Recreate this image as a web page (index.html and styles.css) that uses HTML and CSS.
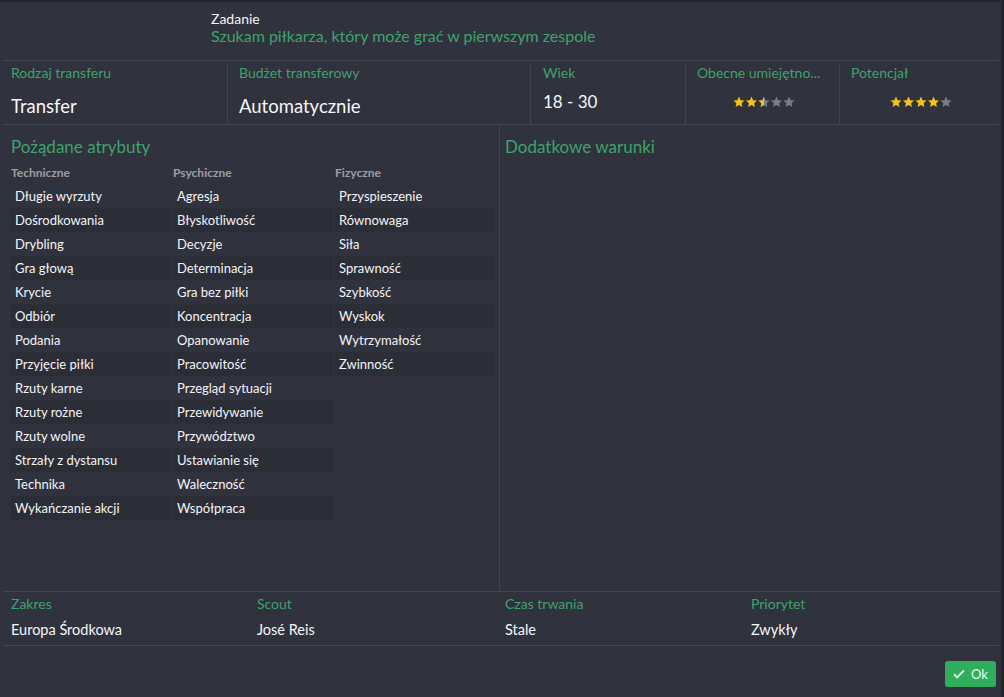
FILE: index.html
```html
<!DOCTYPE html>
<html lang="pl">
<head>
<meta charset="utf-8">
<link rel="stylesheet" href="styles.css">
</head>
<body>
<div class="window">
  <div class="header">
    <div class="task-label">Zadanie</div>
    <div class="task-text">Szukam piłkarza, który może grać w pierwszym zespole</div>
  </div>
  <div class="info">
    <div class="cell c1"><div class="lbl">Rodzaj transferu</div><div class="val">Transfer</div></div>
    <div class="cell c2"><div class="lbl">Budżet transferowy</div><div class="val">Automatycznie</div></div>
    <div class="cell c3"><div class="lbl">Wiek</div><div class="val val-up">18 - 30</div></div>
    <div class="cell c4"><div class="lbl" title="Obecne umiejętności">Obecne umiejętno...</div>
      <div class="stars">
        <svg width="62" height="12" viewBox="0 0 62 12">
          <defs>
            <path id="st" d="M6 0.6l1.6 3.6 3.9 0.4-2.9 2.6 0.8 3.9L6 9.1 2.6 11.1l0.8-3.9L0.5 4.6l3.9-0.4z"/>
            <clipPath id="half"><rect x="0" y="0" width="6" height="12"/></clipPath>
          </defs>
          <use href="#st" x="0" fill="#f5c31a"/>
          <use href="#st" x="12.5" fill="#f5c31a"/>
          <use href="#st" x="25" fill="#7b7c84"/>
          <g transform="translate(25 0)"><use href="#st" fill="#f5c31a" clip-path="url(#half)"/></g>
          <use href="#st" x="37.5" fill="#7b7c84"/>
          <use href="#st" x="50" fill="#7b7c84"/>
        </svg>
      </div>
    </div>
    <div class="cell c5"><div class="lbl">Potencjał</div>
      <div class="stars">
        <svg width="62" height="12" viewBox="0 0 62 12">
          <use href="#st" x="0" fill="#f5c31a"/>
          <use href="#st" x="12.5" fill="#f5c31a"/>
          <use href="#st" x="25" fill="#f5c31a"/>
          <use href="#st" x="37.5" fill="#f5c31a"/>
          <use href="#st" x="50" fill="#7b7c84"/>
        </svg>
      </div>
    </div>
  </div>
  <div class="middle">
    <div class="attrs">
      <div class="section-title">Pożądane atrybuty</div>
      <div class="cols">
        <div class="col">
          <div class="col-head">Techniczne</div>
          <div class="row">Długie wyrzuty</div>
          <div class="row">Dośrodkowania</div>
          <div class="row">Drybling</div>
          <div class="row">Gra głową</div>
          <div class="row">Krycie</div>
          <div class="row">Odbiór</div>
          <div class="row">Podania</div>
          <div class="row">Przyjęcie piłki</div>
          <div class="row">Rzuty karne</div>
          <div class="row">Rzuty rożne</div>
          <div class="row">Rzuty wolne</div>
          <div class="row">Strzały z dystansu</div>
          <div class="row">Technika</div>
          <div class="row">Wykańczanie akcji</div>
        </div>
        <div class="col">
          <div class="col-head">Psychiczne</div>
          <div class="row">Agresja</div>
          <div class="row">Błyskotliwość</div>
          <div class="row">Decyzje</div>
          <div class="row">Determinacja</div>
          <div class="row">Gra bez piłki</div>
          <div class="row">Koncentracja</div>
          <div class="row">Opanowanie</div>
          <div class="row">Pracowitość</div>
          <div class="row">Przegląd sytuacji</div>
          <div class="row">Przewidywanie</div>
          <div class="row">Przywództwo</div>
          <div class="row">Ustawianie się</div>
          <div class="row">Waleczność</div>
          <div class="row">Współpraca</div>
        </div>
        <div class="col">
          <div class="col-head">Fizyczne</div>
          <div class="row">Przyspieszenie</div>
          <div class="row">Równowaga</div>
          <div class="row">Siła</div>
          <div class="row">Sprawność</div>
          <div class="row">Szybkość</div>
          <div class="row">Wyskok</div>
          <div class="row">Wytrzymałość</div>
          <div class="row">Zwinność</div>
        </div>
      </div>
    </div>
    <div class="extra">
      <div class="section-title">Dodatkowe warunki</div>
    </div>
  </div>
  <div class="footer-info">
    <div class="fcell"><div class="lbl">Zakres</div><div class="fval">Europa Środkowa</div></div>
    <div class="fcell"><div class="lbl">Scout</div><div class="fval">José Reis</div></div>
    <div class="fcell"><div class="lbl">Czas trwania</div><div class="fval">Stale</div></div>
    <div class="fcell"><div class="lbl">Priorytet</div><div class="fval">Zwykły</div></div>
  </div>
  <div class="actions">
    <button class="ok">
      <svg width="12" height="10" viewBox="0 0 12 10"><path d="M1 5.2l3.2 3.2L11 1.4" fill="none" stroke="#e4e6e4" stroke-width="2"/></svg>
      <span>Ok</span>
    </button>
  </div>
</div>
</body>
</html>
```

FILE: styles.css
```css
* { box-sizing: border-box; }
html, body { margin: 0; padding: 0; background: #1d1f26; }
body { font-family: Lato, "Open Sans", sans-serif; color: #f2f2f4; }

.window {
  width: 1004px;
  height: 697px;
  background: #30323d;
  border-top: 2px solid #262830;
  border-right: 3px solid #22242b;
  padding: 0 2px 0 3px;
  display: flex;
  flex-direction: column;
  overflow: hidden;
}

.header {
  height: 59px;
  padding: 8px 0 0 208px;
  border-bottom: 1px solid #454753;
}
.task-label { font-size: 14px; line-height: 17px; color: #f4f4f6; }
.task-text { font-size: 16px; line-height: 20px; color: #3ea26c; margin-top: -1px; }

.info {
  display: flex;
  height: 64px;
  border-bottom: 1px solid #454753;
}
.cell {
  border-right: 1px solid #41434e;
  padding: 0 8px 0 8px;
  margin: 3px 0 0 0;
}
.c1 { width: 225px; }
.c2 { width: 303px; padding-left: 11px; }
.c3 { width: 155px; padding-left: 12px; }
.c4 { width: 154px; padding-left: 11px; }
.c5 { flex: 1; border-right: none; padding-left: 11px; }
.lbl { font-size: 14px; line-height: 17px; color: #3ea26c; white-space: nowrap; }
.val { font-size: 18.5px; line-height: 22px; margin-top: 14px; color: #f6f6f8; }
.val-up { font-size: 17px; margin-top: 10px; }
.stars { display: flex; justify-content: center; margin-top: 15px; height: 12px; }
.stars svg { display: block; }

.middle {
  display: flex;
  height: 467px;
  border-bottom: 1px solid #454753;
}
.attrs {
  width: 497px;
  border-right: 1px solid #41434e;
  padding: 10px 0 0 8px;
}
.extra { flex: 1; padding: 10px 0 0 5px; }
.section-title { font-size: 17px; line-height: 23px; color: #3ea26c; }

.cols { display: flex; gap: 2px; margin-top: 4px; }
.col { width: 160px; display: flex; flex-direction: column; }
.col-head { font-size: 12px; font-weight: 700; color: #9c9ea8; line-height: 16px; height: 22px; padding-top: 3px; }
.row {
  height: 24px;
  line-height: 24px;
  font-size: 13px;
  padding-left: 4px;
  color: #f4f4f6;
}
.row:nth-of-type(odd) { background: #2b2d37; }

.footer-info {
  display: grid;
  grid-template-columns: 246px 248px 246px 1fr;
  height: 54px;
  border-bottom: 1px solid #454753;
  padding: 3px 0 0 8px;
}
.fval { font-size: 14.5px; line-height: 18px; margin-top: 9px; color: #f6f6f8; }

.actions {
  flex: 1;
  display: flex;
  justify-content: flex-end;
  align-items: flex-start;
  padding: 15px 3px 0 0;
}
.ok {
  width: 51px;
  height: 26px;
  background: #2fae5c;
  border: none;
  border-radius: 3px;
  color: #f2f4f2;
  font-family: Lato, "Open Sans", sans-serif;
  font-size: 13px;
  display: flex;
  align-items: center;
  justify-content: center;
  gap: 6px;
  padding: 0;
}
.ok svg { display: block; }
```
